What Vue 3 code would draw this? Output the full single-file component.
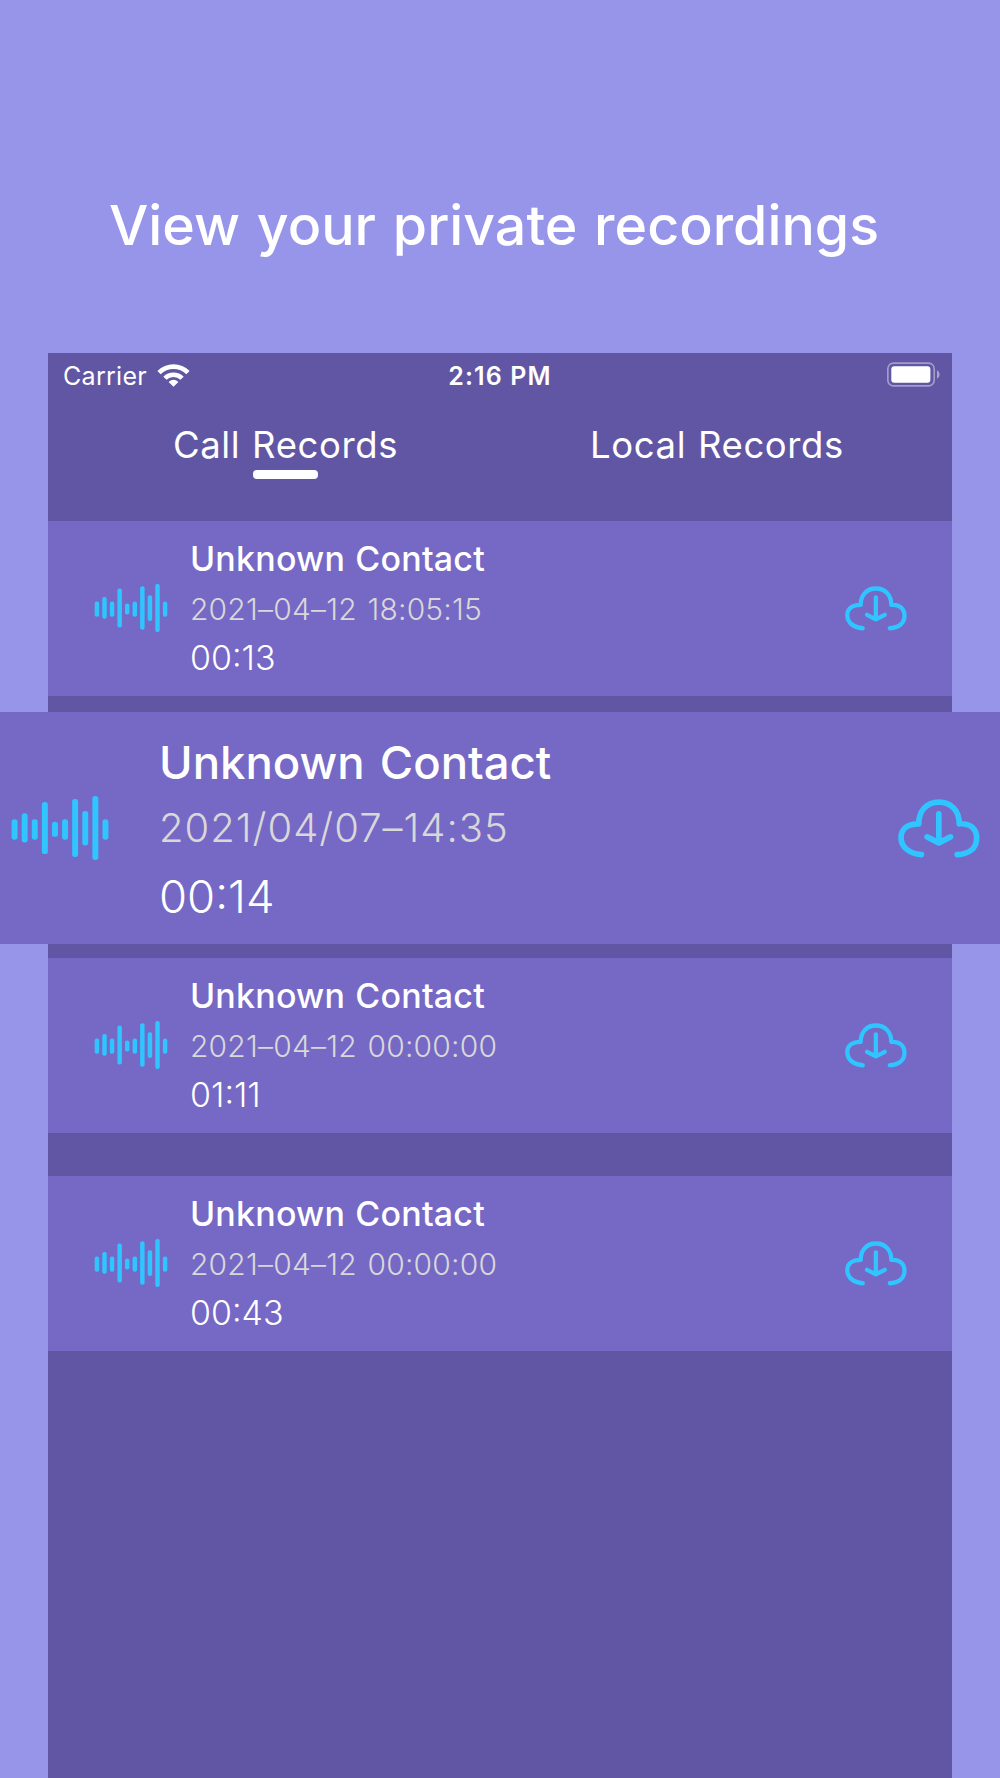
<template>
  <div class="page">
    <h1 class="headline">View your private recordings</h1>

    <div class="phone">
      <div class="status-bar">
        <div class="status-left">
          <span class="carrier">Carrier</span>
          <svg class="wifi" viewBox="0 0 98 73">
            <path d="M49 72 L34 58 Q49 44 64 58 Z" />
            <path d="M18 42 A44 44 0 0 1 80 42 L70 51 A30 30 0 0 0 28 51 Z" />
            <path d="M0 24 A70 70 0 0 1 98 24 L88 34 A56 56 0 0 0 10 34 Z" />
          </svg>
        </div>
        <span class="time">2:16 PM</span>
        <svg class="battery" viewBox="0 0 160 74">
          <rect x="2.5" y="2.5" width="140" height="69" rx="17" fill="none" stroke="#fff" stroke-opacity="0.42" stroke-width="5" />
          <rect x="13" y="12" width="118" height="50" rx="9" fill="#fff" />
          <path d="M151 24 Q159 28 159 37 Q159 46 151 50 Z" fill="#fff" fill-opacity="0.45" />
        </svg>
      </div>

      <div class="tabs">
        <button
          v-for="tab in tabs"
          :key="tab.id"
          class="tab"
          :class="{ active: tab.id === activeTab }"
          @click="activeTab = tab.id"
        >
          {{ tab.name }}
        </button>
      </div>

      <div class="records">
        <div
          v-for="record in records"
          :key="record.id"
          class="record"
          :class="{ featured: record.featured }"
        >
          <svg class="wave" viewBox="35 47 292 193">
            <rect
              v-for="(bar, index) in bars"
              :key="index"
              :x="35 + index * 30.45"
              :y="bar[0]"
              width="18"
              :height="bar[1] - bar[0]"
              rx="8"
            />
          </svg>
          <div class="info">
            <div class="name">{{ record.name }}</div>
            <div class="date">{{ record.date }}</div>
            <div class="duration">{{ record.duration }}</div>
          </div>
          <svg class="cloud" viewBox="85 86 245 176">
            <path d="M155 252 C119 249 94 230 94 201 C94 174 115 160 147 160 C147 122 170 95 207 95 C245 95 268 122 268 160 C300 158 320 173 320 203 C320 234 296 250 262 252" />
            <path d="M207 130 V216 M172 199 L207 217 L242 199" />
          </svg>
        </div>
      </div>
    </div>
  </div>
</template>

<script setup>
import { ref } from 'vue'

const activeTab = ref('call')

const tabs = [
  { id: 'call', name: 'Call Records' },
  { id: 'local', name: 'Local Records' }
]

const records = [
  { id: 1, name: 'Unknown Contact', date: '2021–04–12 18:05:15', duration: '00:13' },
  { id: 2, name: 'Unknown Contact', date: '2021/04/07–14:35', duration: '00:14', featured: true },
  { id: 3, name: 'Unknown Contact', date: '2021–04–12 00:00:00', duration: '01:11' },
  { id: 4, name: 'Unknown Contact', date: '2021–04–12 00:00:00', duration: '00:43' }
]

// top and bottom of each bar in the waveform
const bars = [
  [117, 179], [99, 187], [117, 179], [65, 222], [125, 170],
  [117, 179], [56, 231], [92, 196], [47, 240], [117, 179]
]
</script>

<style>
body {
  margin: 0;
  background: #9795ea;
}
</style>

<style scoped>
.page {
  box-sizing: border-box;
  height: 1778px;
  overflow: hidden;
  display: flex;
  flex-direction: column;
  background: #9795ea;
  color: #fff;
  font-family: Inter, "Liberation Sans", sans-serif;
  white-space: nowrap;
}

.headline {
  flex: none;
  height: 353px;
  margin: 0;
  padding: 185px 0 0 109px;
  box-sizing: border-box;
  font-size: 55.5px;
  font-weight: 500;
  line-height: 80px;
  word-spacing: 2px;
}

.phone {
  flex: 1;
  margin: 0 48px;
  background: #6156a4;
}

.status-bar {
  display: grid;
  grid-template-columns: 1fr auto 1fr;
  align-items: center;
  height: 44px;
  padding: 0 15px;
  font-size: 25px;
}

.status-left {
  display: flex;
  align-items: center;
  gap: 10px;
  line-height: 46px;
  letter-spacing: 0.3px;
}

.wifi {
  width: 33px;
  height: 24px;
  margin-bottom: 3px;
  fill: #fff;
}

.time {
  font-weight: 600;
  line-height: 46px;
  letter-spacing: 1.1px;
}

.battery {
  justify-self: end;
  width: 53px;
  height: 25px;
  margin: 0 -3px 3px 0;
}

.tabs {
  display: flex;
  gap: 192px;
  height: 124px;
  padding-left: 125px;
  box-sizing: border-box;
}

.tab {
  display: flex;
  flex-direction: column;
  align-items: center;
  padding: 23px 0 0;
  border: none;
  background: none;
  color: inherit;
  font-family: inherit;
  font-size: 36.5px;
  line-height: 50px;
  letter-spacing: 0.6px;
  word-spacing: 1px;
  cursor: pointer;
}

.tab.active::after {
  content: '';
  width: 65px;
  height: 9px;
  border-radius: 4px;
  background: #fff;
}

.record {
  display: flex;
  align-items: center;
  height: 175px;
  margin-bottom: 43px;
  padding: 0 45px 0 46px;
  box-sizing: border-box;
  background: #7668c5;
}

.record:first-child {
  margin-bottom: 16px;
}

.wave {
  flex: none;
  width: 74px;
  height: 48px;
  margin-bottom: 1px;
  fill: #30c5ff;
}

.info {
  flex: 1;
  margin-left: 22px;
  padding-bottom: 2px;
}

.name {
  font-size: 34px;
  font-weight: 500;
  line-height: 50px;
  letter-spacing: 0.2px;
  word-spacing: 1px;
}

.date {
  color: #d8d8d8;
  font-size: 30px;
  font-weight: 350;
  line-height: 50px;
  letter-spacing: 0.2px;
  word-spacing: 2px;
}

.duration {
  font-size: 34px;
  font-weight: 350;
  line-height: 48px;
}

.cloud {
  flex: none;
  width: 62px;
  height: 45px;
  fill: none;
  stroke: #30c5ff;
  stroke-width: 17;
  stroke-linecap: round;
  stroke-linejoin: round;
}

/* enlarged row that runs past both sides of the phone */
.featured {
  height: 232px;
  margin: 0 -48px 14px;
  padding: 0 20px 0 11px;
}

.featured .wave {
  width: 98px;
  height: 64px;
}

.featured .info {
  margin-left: 50px;
  padding: 6px 0 0;
}

.featured .name {
  font-size: 45.5px;
  line-height: 66px;
  letter-spacing: 0;
  word-spacing: 3px;
}

.featured .date {
  font-size: 40px;
  font-weight: 300;
  line-height: 64px;
  letter-spacing: 1px;
}

.featured .duration {
  font-size: 45.5px;
  font-weight: 300;
  line-height: 73px;
}

.featured .cloud {
  width: 82px;
  height: 59px;
}
</style>
